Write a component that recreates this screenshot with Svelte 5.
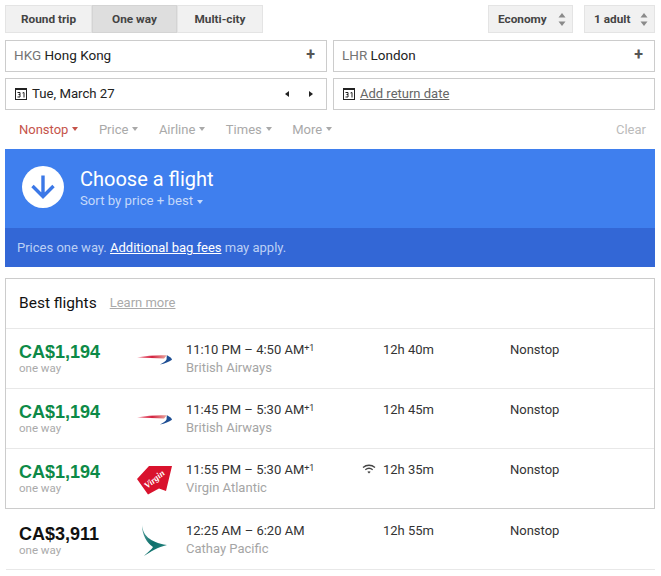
<script>
    const filters = [
        { label: "Nonstop", active: true },
        { label: "Price" },
        { label: "Airline" },
        { label: "Times" },
        { label: "More" },
    ];
    const best = [
        { price: "CA$1,194", dep: "11:10 PM – 4:50 AM", plus: true, airline: "British Airways", logo: "ba", duration: "12h 40m" },
        { price: "CA$1,194", dep: "11:45 PM – 5:30 AM", plus: true, airline: "British Airways", logo: "ba", duration: "12h 45m" },
        { price: "CA$1,194", dep: "11:55 PM – 5:30 AM", plus: true, airline: "Virgin Atlantic", logo: "virgin", duration: "12h 35m", wifi: true },
    ];
    const other = [
        { price: "CA$3,911", dep: "12:25 AM – 6:20 AM", airline: "Cathay Pacific", logo: "cathay", duration: "12h 55m" },
    ];
</script>

{#snippet calendar()}
    <svg class="cal" viewBox="0 0 12 12" width="12" height="12">
        <rect x="0.5" y="0.5" width="11" height="11" fill="#fff" stroke="#222" />
        <rect x="0.5" y="0.5" width="11" height="1.500" fill="#222" />
        <path d="M2.500 4.500h2.500v2h-1.500M5 6.500v2.500H2.500M7.500 5l1.500-.5v5" fill="none" stroke="#222" stroke-width="1" />
    </svg>
{/snippet}

{#snippet updown()}
    <svg class="updown" viewBox="0 0 8 13" width="8" height="13">
        <path d="M4 0l3.500 4.500h-7zM4 13l-3.500-4.500h7z" fill="#8a8a8a" />
    </svg>
{/snippet}

{#snippet row(f, green)}
    <div class="row">
        <div class="price-col">
            <div class="price" class:green>{f.price}</div>
            <div class="oneway">one way</div>
        </div>
        <div class="logo-col">
            {#if f.logo === "ba"}
                <svg viewBox="0 0 36 14" width="36" height="14">
                    <defs>
                        <linearGradient id="ba-red" x1="0" x2="1" y1="0" y2="0">
                            <stop offset="0" stop-color="#e8536b" stop-opacity="0.5" />
                            <stop offset="0.5" stop-color="#d3223f" />
                            <stop offset="1" stop-color="#e9a9a0" />
                        </linearGradient>
                    </defs>
                    <path d="M0 4.500C10 2.500 22 1.800 30 2.300L27 5.400C19 5.200 9 5.300 0 4.500z" fill="url(#ba-red)" />
                    <path d="M30 2.300C33 3.800 35 5.500 35 6.800C32 9 28 10.600 23 11.500C26 9.800 29 8 29.500 6.500C29.800 5.300 29.500 3.500 30 2.300z" fill="#1f4f94" />
                </svg>
            {:else if f.logo === "virgin"}
                <svg viewBox="0 0 36 29" width="36" height="29">
                    <path d="M12 0L35 0L29 25L22 22.500L11 28.500L0 13z" fill="#d9122d" />
                    <text x="18" y="16" text-anchor="middle" transform="rotate(-40 18 14)" class="virgin">Virgin</text>
                </svg>
            {:else}
                <svg class="cathay" viewBox="0 0 25 31" width="25" height="31">
                    <defs>
                        <linearGradient id="cx" x1="0" x2="1" y1="0" y2="1">
                            <stop offset="0" stop-color="#5da5a2" />
                            <stop offset="0.5" stop-color="#0e6f6b" />
                            <stop offset="1" stop-color="#2a8a84" />
                        </linearGradient>
                    </defs>
                    <path d="M0 0C1 10 7 17 25 20C16 22 8 27 2 31C6 27 10 24 11 22C5 18 0 10 0 0z" fill="url(#cx)" />
                </svg>
            {/if}
        </div>
        <div class="times-col">
            <div class="times">{f.dep}{#if f.plus}<sup>+1</sup>{/if}</div>
            <div class="airline">{f.airline}</div>
        </div>
        <div class="duration-col">
            {#if f.wifi}
                <svg class="wifi" viewBox="0 0 14 10" width="14" height="10">
                    <path d="M1 3.500C4.500 .5 9.500 .5 13 3.500M3.300 5.800C5.500 4 8.500 4 10.700 5.800" fill="none" stroke="#444" stroke-width="1.300" />
                    <path d="M7 9.500L5.300 7.800C6.300 7 7.700 7 8.700 7.800z" fill="#444" />
                </svg>
            {/if}
            {f.duration}
        </div>
        <div class="stops">Nonstop</div>
    </div>
{/snippet}

<div class="page">
    <div class="top">
        <div class="trip">
            <button class="trip-btn">Round trip</button>
            <button class="trip-btn on">One way</button>
            <button class="trip-btn">Multi-city</button>
        </div>
        <div class="selects">
            <button class="sel economy">Economy {@render updown()}</button>
            <button class="sel adult">1 adult {@render updown()}</button>
        </div>
    </div>

    <div class="fields">
        <div class="field">
            <span class="place"><span class="code">HKG</span> Hong Kong</span>
            <span class="plus">+</span>
        </div>
        <div class="field">
            <span class="place"><span class="code">LHR</span> London</span>
            <span class="plus">+</span>
        </div>
        <div class="field date">
            {@render calendar()}
            <span class="date-text">Tue, March 27</span>
            <span class="arrows"><i class="tri left"></i><i class="tri right"></i></span>
        </div>
        <div class="field date">
            {@render calendar()}
            <a href="#return" class="return">Add return date</a>
        </div>
    </div>

    <div class="filters">
        {#each filters as f}
            <span class="filter" class:active={f.active}>{f.label}<i class="caret"></i></span>
        {/each}
        <span class="clear">Clear</span>
    </div>

    <div class="banner">
        <div class="banner-main">
            <div class="circle">
                <svg viewBox="0 0 42 42" width="42" height="42">
                    <path d="M21 9.500V30M10.500 20L21 30.500L31.500 20" fill="none" stroke="#3b78e7" stroke-width="3.400" />
                </svg>
            </div>
            <div class="banner-text">
                <div class="choose">Choose a flight</div>
                <div class="sort">Sort by price + best<i class="caret"></i></div>
            </div>
        </div>
        <div class="banner-note">Prices one way. <a href="#fees">Additional bag fees</a> may apply.</div>
    </div>

    <div class="best">
        <div class="best-head">
            <span class="best-title">Best flights</span>
            <a href="#learn" class="learn">Learn more</a>
        </div>
        {#each best as f}
            {@render row(f, true)}
        {/each}
    </div>

    <div class="others">
        {#each other as f}
            {@render row(f, false)}
        {/each}
    </div>
</div>

<style>
    :global(body) {
        margin: 0;
        background: #fff;
        font-family: Roboto, "Liberation Sans", sans-serif;
    }
    .page {
        width: 661px;
        height: 576px;
        overflow: hidden;
        box-sizing: border-box;
        padding: 5px 6px 0 5px;
    }
    .top {
        display: flex;
        justify-content: space-between;
        height: 28px;
    }
    .trip {
        display: flex;
    }
    button {
        font-family: Roboto, "Liberation Sans", sans-serif;
        font-size: 11.800px;
        font-weight: 700;
        color: #444;
        background: #f1f1f1;
        border: 1px solid #e4e4e4;
        padding: 0;
        height: 28px;
        box-sizing: border-box;
    }
    .trip-btn {
        width: 87px;
    }
    .trip-btn:nth-child(2) {
        width: 85px;
    }
    .trip-btn:nth-child(3) {
        width: 86px;
    }
    .trip-btn.on {
        background: #dedede;
        border-color: #d4d4d4;
    }
    .selects {
        display: flex;
        gap: 11px;
    }
    .sel {
        display: flex;
        align-items: center;
        justify-content: space-between;
        padding: 0 6px 0 9px;
    }
    .economy {
        width: 85px;
    }
    .adult {
        width: 71px;
    }
    .updown {
        display: block;
    }
    .fields {
        display: grid;
        grid-template-columns: 322px 322px;
        column-gap: 6px;
        row-gap: 6px;
        margin-top: 7px;
    }
    .field {
        height: 32px;
        box-sizing: border-box;
        border: 1px solid #ccc;
        display: flex;
        align-items: center;
        justify-content: space-between;
        padding: 0 8px 2px;
        font-size: 13px;
        color: #222;
    }
    .place {
        font-size: 13.500px;
    }
    .code {
        color: #757575;
    }
    .plus {
        font-size: 16px;
        font-weight: 700;
        color: #555;
        margin-right: 3px;
        line-height: 1;
    }
    .date {
        justify-content: flex-start;
        padding-left: 9px;
        gap: 5px;
    }
    .date-text {
        flex: 1;
        font-size: 13.200px;
    }
    .cal {
        flex: none;
        margin-top: 2px;
    }
    .arrows {
        display: flex;
        gap: 20px;
        margin-right: 5px;
        margin-top: 2px;
    }
    .tri {
        display: block;
        width: 0;
        height: 0;
        border-top: 3.500px solid transparent;
        border-bottom: 3.500px solid transparent;
    }
    .tri.left {
        border-right: 4px solid #222;
    }
    .tri.right {
        border-left: 4px solid #222;
    }
    .return {
        color: #666;
        text-decoration: underline;
    }
    .filters {
        display: flex;
        align-items: center;
        height: 39px;
        box-sizing: border-box;
        padding: 0 9px 1px 14px;
        font-size: 13px;
        color: #a9a9a9;
    }
    .filter {
        margin-right: 20.500px;
        display: flex;
        align-items: center;
    }
    .filter.active {
        color: #c5534a;
    }
    .caret {
        display: inline-block;
        width: 0;
        height: 0;
        margin-left: 4px;
        vertical-align: middle;
        border-left: 3.500px solid transparent;
        border-right: 3.500px solid transparent;
        border-top: 4px solid currentColor;
    }
    .clear {
        margin-left: auto;
        color: #bbb;
    }
    .banner {
        background: #3f7fee;
        color: #fff;
    }
    .banner-main {
        height: 79px;
        display: flex;
        align-items: center;
        padding-left: 17px;
        gap: 16px;
        box-sizing: border-box;
        padding-bottom: 4px;
    }
    .banner-text {
        padding-top: 3px;
    }
    .circle {
        width: 42px;
        height: 42px;
        border-radius: 50%;
        background: #fff;
    }
    .circle svg {
        display: block;
    }
    .choose {
        font-size: 20px;
        line-height: 26px;
    }
    .sort {
        font-size: 13.200px;
        line-height: 18px;
        color: #c5d9fa;
    }
    .banner-note {
        height: 39px;
        background: #3367d6;
        display: flex;
        align-items: center;
        white-space: pre;
        padding-left: 12px;
        font-size: 13px;
        color: #bcd0f5;
    }
    .banner-note a {
        color: #fff;
        text-decoration: underline;
    }
    .best {
        margin-top: 11px;
        border: 1px solid #ccc;
        box-sizing: border-box;
    }
    .best-head {
        height: 49px;
        display: flex;
        align-items: center;
        gap: 13px;
        padding: 0 0 2px 13px;
        box-sizing: border-box;
    }
    .best-title {
        font-size: 15.500px;
        color: #111;
    }
    .learn {
        font-size: 13px;
        color: #aaa;
        text-decoration: underline;
    }
    .row {
        height: 60px;
        box-sizing: border-box;
        border-top: 1px solid #e8e8e8;
        display: flex;
        padding: 12px 0 0 13px;
    }
    .others {
        padding-left: 1px;
    }
    .others .row {
        border-top: 0;
        border-bottom: 1px solid #e8e8e8;
        height: 61px;
        padding-top: 13px;
    }
    .price-col {
        width: 118px;
    }
    .price {
        font-family: "Liberation Sans", Arial, sans-serif;
        font-size: 18px;
        font-weight: 700;
        line-height: 19px;
        margin-top: 2px;
        color: #111;
    }
    .price.green {
        color: #0d8a47;
    }
    .others .price {
        margin-top: 3px;
    }
    .oneway {
        font-size: 11.500px;
        line-height: 12px;
        color: #aaa;
    }
    .logo-col {
        width: 49px;
        height: 38px;
        display: flex;
        align-items: center;
    }
    .logo-col svg {
        display: block;
    }
    .logo-col svg.cathay {
        margin: -2px 0 0 5px;
    }
    .virgin {
        font-family: "Liberation Serif", serif;
        font-style: italic;
        font-size: 9px;
        font-weight: 700;
        fill: #fff;
    }
    .times-col {
        width: 197px;
    }
    .times {
        font-size: 13px;
        line-height: 18px;
        color: #333;
        white-space: nowrap;
    }
    .times sup {
        font-size: 9px;
        line-height: 0;
        vertical-align: 3px;
    }
    .airline {
        font-size: 13px;
        line-height: 17px;
        color: #a5a5a5;
    }
    .duration-col {
        width: 127px;
        font-size: 13px;
        line-height: 18px;
        color: #333;
        position: relative;
    }
    .wifi {
        position: absolute;
        left: -21px;
        top: 3px;
    }
    .stops {
        font-size: 13px;
        line-height: 18px;
        color: #333;
    }
</style>
